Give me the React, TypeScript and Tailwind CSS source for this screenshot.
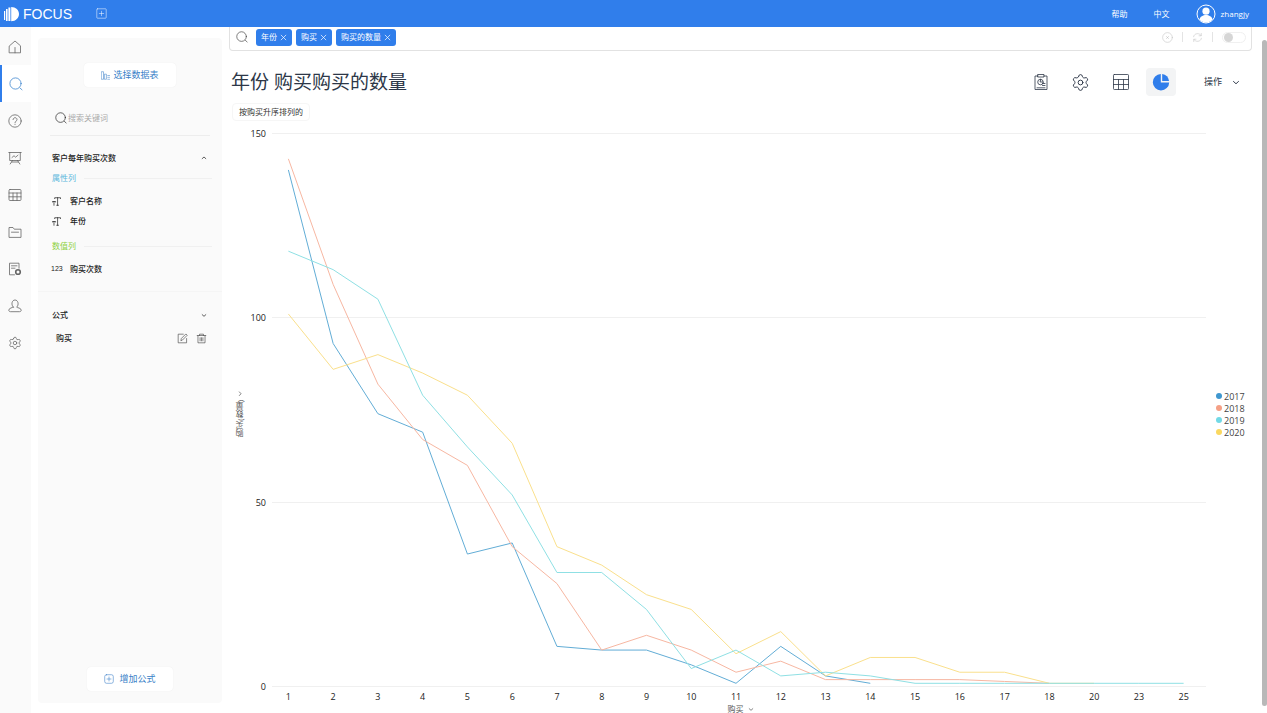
import type { ReactNode } from "react";
import { Settings } from "lucide-react";

const categories = [1, 2, 3, 4, 5, 6, 7, 8, 9, 10, 11, 12, 13, 14, 15, 16, 17, 18, 20, 23, 25];

const series = [
  {
    name: "2017",
    dot: "bg-[#3f97cf]",
    line: "stroke-[#62add6]",
    data: [140, 93, 74, 69, 36, 39, 11, 10, 10, 6, 1, 11, 3, 1],
  },
  {
    name: "2018",
    dot: "bg-[#f5a086]",
    line: "stroke-[#f7b7a2]",
    data: [143, 109, 82, 67, 60, 38, 28, 10, 14, 10, 4, 7, 2, 2, 2, 2, 1.5, 1],
  },
  {
    name: "2020",
    dot: "bg-[#fad860]",
    line: "stroke-[#fae08c]",
    data: [101, 86, 90, 85, 79, 66, 38, 33, 25, 21, 9, 15, 3, 8, 8, 4, 4, 1, 1],
  },
  {
    name: "2019",
    dot: "bg-[#72d9e6]",
    line: "stroke-[#8fe0e4]",
    data: [118, 113, 105, 79, 65, 52, 31, 31, 21, 5, 10, 3, 4, 3, 1, 1, 1, 1, 1, 1, 1],
  },
];

const legend = [...series].sort((a, b) => a.name.localeCompare(b.name));

function Icon({ className = "size-3.5", box = 14, children }: { className?: string; box?: number; children: ReactNode }) {
  return (
    <svg
      viewBox={`0 0 ${box} ${box}`}
      className={`shrink-0 ${className}`}
      fill="none"
      stroke="currentColor"
      strokeWidth="0.8"
      strokeLinecap="round"
      strokeLinejoin="round"
      aria-hidden="true"
    >
      {children}
    </svg>
  );
}

function SearchIcon({ className }: { className?: string }) {
  return (
    <Icon className={className}>
      <circle cx="6.5" cy="6.5" r="5.6" />
      <path d="M11 11 13 12.8" />
    </Icon>
  );
}

function Chevron({ className = "size-1.5", d = "M1.5 4 5 7.2 8.5 4" }: { className?: string; d?: string }) {
  return (
    <svg viewBox="0 0 10 10" className={`shrink-0 ${className}`} fill="none" stroke="currentColor" strokeWidth="1.2" aria-hidden="true">
      <path d={d} />
    </svg>
  );
}

const navItems = [
  {
    label: "首页",
    icon: (
      <Icon>
        <path d="M1.5 5.800 7 1l5.500 4.800v7h-11zM7 12.800V7.500" />
      </Icon>
    ),
  },
  { label: "搜索", active: true, icon: <SearchIcon /> },
  {
    label: "问答",
    icon: (
      <Icon>
        <circle cx="7" cy="7" r="6.2" />
        <path d="M5 5.600c0-2.600 4-2.600 4 0 0 1.500-2 1.500-2 3M7 10.200v.3" />
      </Icon>
    ),
  },
  {
    label: "看板",
    icon: (
      <Icon>
        <path d="M.8 1.500h12.400M1.700 1.500v8h10.600v-8M4 6.500l2-1.800 1.600 1.500 2.400-2M4.500 9.500 2.200 13M9.500 9.500l2.300 3.500M3.800 11h6.400" />
      </Icon>
    ),
  },
  {
    label: "数据表",
    icon: (
      <Icon>
        <rect x="1" y="1.5" width="12" height="11" rx="1" />
        <path d="M1 5h12M1 8.800h12M5 5v7.500M9 5v7.500" />
      </Icon>
    ),
  },
  {
    label: "资源",
    icon: (
      <Icon>
        <path d="M1 12V2.500h4l1.300 1.700H13V12zM3.500 7.200h7" />
      </Icon>
    ),
  },
  {
    label: "报表",
    icon: (
      <Icon>
        <path d="M6.500 12.800h-5V1.200h9.500v5M3.500 3.800h5.500M3.500 6.200h3.500" />
        <circle cx="10" cy="10" r="2.3" strokeWidth="1.6" />
      </Icon>
    ),
  },
  {
    label: "用户",
    icon: (
      <Icon>
        <path d="M5.300 8.200C2.800 5.800 3.800 1 7 1s4.200 4.800 1.700 7.200c.3.600 4.500.6 4.500 3 0 1-.8 1.500-1.700 1.500H2.500C1.600 12.700.8 12.200.8 11.200c0-2.400 4.200-2.400 4.500-3z" />
      </Icon>
    ),
  },
  { label: "设置", icon: <Settings className="size-3.5" strokeWidth={1.3} /> },
];

function Header() {
  return (
    <header className="flex h-[27px] shrink-0 items-center bg-[#307eeb] text-[8px] text-white">
      <a href="#" className="flex items-center gap-1 pl-1" aria-label="FOCUS">
        <svg viewBox="0 0 15 16" className="h-4 w-[15px]" fill="currentColor" aria-hidden="true">
          <path d="M0 5h1.200v9H0zM2 3h1.600v12H2zM4.400 1.500h2v13.500h-2zM7.200 1C11.800 1 15 4 15 8s-3.200 7.200-7.800 7.200z" />
        </svg>
        <span className="font-['Liberation_Sans',sans-serif] text-[14px] leading-none">FOCUS</span>
      </a>
      <button type="button" aria-label="新建" className="ml-6 text-white/80">
        <Icon className="size-[11px]">
          <rect x="1" y="1" width="12" height="12" rx="1" />
          <path d="M7 4.200v5.600M4.200 7h5.600" />
        </Icon>
      </button>
      <nav className="ml-auto flex items-center pr-[18px]">
        <a href="#">帮助</a>
        <button type="button" className="ml-[26px]">中文</button>
        <a href="#" className="ml-[26px] flex items-center gap-[5px]">
          <svg viewBox="0 0 20 20" className="size-5" aria-hidden="true">
            <circle cx="10" cy="10" r="9" fill="none" stroke="#fff" strokeWidth="1" />
            <circle cx="10" cy="7.2" r="3.6" fill="#fff" />
            <path d="M3.500 15.600c1-6 12-6 13 0-3.300 4-9.700 4-13 0z" fill="#fff" />
          </svg>
          <span>zhangjy</span>
        </a>
      </nav>
    </header>
  );
}

function Sidebar() {
  return (
    <nav className="w-[31px] shrink-0 bg-[#fafafa] pt-px text-[#666]">
      {navItems.map((item) => (
        <a
          key={item.label}
          href="#"
          aria-label={item.label}
          className={
            item.active
              ? "flex h-[37px] items-center border-l-2 border-[#307eeb] bg-white pl-[7px] text-[#3f86cf]"
              : "flex h-[37px] items-center pl-2"
          }
        >
          {item.icon}
        </a>
      ))}
    </nav>
  );
}

function GroupLabel({ color, children }: { color: string; children: ReactNode }) {
  return (
    <div className={`flex h-5 items-center gap-2 ${color}`}>
      {children}
      <span className="h-px flex-1 bg-[#f0f0f0]" />
    </div>
  );
}

function Column({ type, children }: { type: "text" | "number"; children: ReactNode }) {
  return (
    <li className="flex h-5 items-center">
      <span className="flex w-[18px] items-center">
        {type === "text" ? (
          <Icon className="size-[9px]" box={10}>
            <path d="M3 1.800V.8h6.500v1M6.200.8v8.400M5.200 9.200h2M.4 5.600V5h3.600v.6M2.200 5v4.200" />
          </Icon>
        ) : (
          <span className="-ml-px font-['Liberation_Sans',sans-serif] text-[7px]">123</span>
        )}
      </span>
      {children}
    </li>
  );
}

function DataPanel() {
  return (
    <aside className="mx-[7px] mt-[11px] mb-2.5 flex w-[184px] shrink-0 flex-col rounded bg-[#fafafa] pt-[25px] pb-3 text-[8px] text-[#222]">
      <button
        type="button"
        className="flex h-6 w-[92px] items-center justify-center gap-[3px] self-center rounded-sm bg-white text-[9px] text-[#3a7fc8] shadow-[0_0_1px_#e5e5e5]"
      >
        <Icon className="size-[9px]" box={10}>
          <path d="M.8.800h2v8.400h-2zM4.200 3.500h1.800v5.700H4.200zM7.500 5h2M7.500 7h2M7.500 9.200h2" strokeWidth="0.6" />
        </Icon>
        选择数据表
      </button>
      <label className="mx-3 mt-3.5 flex h-[35px] items-center gap-px border-b border-[#ededed] pl-[5px]">
        <SearchIcon className="size-3" />
        <input type="text" aria-label="搜索关键词" placeholder="搜索关键词" className="w-full bg-transparent outline-none placeholder:text-[#aaa]" />
      </label>

      {/* Table columns */}
      <div className="mt-3 pr-2.5 pl-3.5">
        <button type="button" className="flex h-5 w-full items-center justify-between pr-[5px] font-medium" aria-expanded="true">
          客户每年购买次数
          <Chevron d="M1.5 6.5 5 3.3 8.5 6.5" />
        </button>
        <GroupLabel color="text-[#5bb8dc]">属性列</GroupLabel>
        <ul className="mt-[3px] font-medium">
          <Column type="text">客户名称</Column>
          <Column type="text">年份</Column>
        </ul>
        <div className="mt-[5px]">
          <GroupLabel color="text-[#8fd13f]">数值列</GroupLabel>
        </div>
        <ul className="mt-[3px] font-medium">
          <Column type="number">购买次数</Column>
        </ul>
      </div>

      {/* Formulas */}
      <div className="mt-3 border-t border-[#f5f5f5] pt-[13px] pr-2.5 pl-3.5">
        <button type="button" className="flex h-5 w-full items-center justify-between pr-[5px] font-medium" aria-expanded="true">
          公式
          <Chevron />
        </button>
        <div className="mt-[3px] flex h-5 items-center pr-[5px] pl-1 font-medium">
          <span className="flex-1">购买</span>
          <button type="button" aria-label="编辑" className="mr-2 text-[#444]">
            <Icon className="size-[11px]">
              <path d="M8 1.500H1.500v11h10.700V7M5 9.300l.5-2.300L11.300 1.200l1.700 1.700-5.800 5.800z" />
            </Icon>
          </button>
          <button type="button" aria-label="删除" className="text-[#444]">
            <Icon className="size-[11px]">
              <path d="M1.500 3.200h11M4.500 3.200V1.500h5v1.700M2.500 3.200v9.300h9V3.200M5.200 6v4M7 6v4M8.800 6v4" />
            </Icon>
          </button>
        </div>
      </div>

      <button
        type="button"
        className="mt-auto flex h-6 w-[86px] items-center justify-center gap-[5px] self-center rounded-sm bg-white text-[9px] text-[#3a7fc8] shadow-[0_0_1px_#e5e5e5]"
      >
        <Icon className="size-2.5">
          <rect x="1" y="1" width="12" height="12" rx="2.5" />
          <path d="M7 4.200v5.600M4.200 7h5.600" />
        </Icon>
        增加公式
      </button>
    </aside>
  );
}

function SearchBar() {
  return (
    <div className="flex h-6 shrink-0 items-center rounded-b border border-t-0 border-[#e2e2e2] pr-[5px] pb-[3px] pl-1.5 text-[8px]">
      <SearchIcon className="size-3 text-[#444]" />
      <div className="ml-2 flex gap-1">
        {["年份", "购买", "购买的数量"].map((term) => (
          <span key={term} className="flex h-[17px] items-center gap-[3px] rounded-[3px] bg-[#307eeb] px-[5px] text-white">
            {term}
            <button type="button" aria-label={`移除${term}`}>
              <svg viewBox="0 0 8 8" className="size-[7px]" stroke="currentColor" strokeWidth="0.8" aria-hidden="true">
                <path d="M1 1l6 6M7 1 1 7" />
              </svg>
            </button>
          </span>
        ))}
      </div>
      <input type="text" aria-label="搜索" className="min-w-0 flex-1 px-2 outline-none" />
      <div className="flex items-center gap-[9px] text-[#c8c8c8]">
        <button type="button" aria-label="清空">
          <Icon className="size-[11px]">
            <circle cx="7" cy="7" r="6.2" />
            <path d="M6 6l2 2M8 6 6 8" strokeWidth="1.2" />
          </Icon>
        </button>
        <span className="h-2.5 w-px bg-[#e4e4e4]" />
        <button type="button" aria-label="刷新">
          <Icon className="size-[11px]">
            <path d="M2 6C2.500 1.500 9.500.5 11.500 4.500M11.800 1.800v3H9M12 8c-.5 4.500-7.500 5.500-9.500 1.500M2.200 12.200v-3H5" />
          </Icon>
        </button>
        <span className="h-2.5 w-px bg-[#e4e4e4]" />
        <input
          type="checkbox"
          role="switch"
          aria-label="自动搜索"
          className="h-[11px] w-6 appearance-none rounded-full border border-[#f0f0f0] bg-white before:ml-px before:block before:size-[9px] before:rounded-full before:bg-[#d6d6d6]"
        />
      </div>
    </div>
  );
}

function Toolbar() {
  return (
    <div className="mt-4 flex h-[30px] shrink-0 items-center pr-3 pl-0.5 text-[#2d3748]">
      <h1 className="flex-1 text-[19px] leading-none font-normal">年份 购买购买的数量</h1>
      <div className="flex items-center gap-2.5">
        <button type="button" aria-label="保存" className="flex h-7 w-[30px] items-center justify-center">
          <Icon className="size-[18px]" box={18}>
            <path d="M6 3H3v13.500h12V3h-3M6 1.500h6V4H6zM5 14.800h8M10.500 10.500H13M10.500 12.500H13" />
            <path d="M8.500 6.200a2.800 2.800 0 1 0 2.800 2.800H8.500zM8.500 6.200a2.800 2.800 0 0 1 2.800 2.800" />
          </Icon>
        </button>
        <button type="button" aria-label="配置" className="flex h-7 w-[30px] items-center justify-center">
          <Settings className="size-[19px]" strokeWidth={1.2} />
        </button>
        <button type="button" aria-label="表格" className="flex h-7 w-[30px] items-center justify-center">
          <Icon className="size-[18px]" box={18}>
            <rect x="1.5" y="1.5" width="15" height="15" rx="0.8" />
            <path d="M1.500 6.500h15M1.500 11.500h15M6.500 6.500v10M11.500 6.500v10" />
          </Icon>
        </button>
        <button type="button" aria-label="图表" aria-pressed="true" className="flex h-7 w-[30px] items-center justify-center rounded bg-[#f3f4f5] text-[#307eeb]">
          <svg viewBox="0 0 18 18" className="size-[18px]" fill="currentColor" aria-hidden="true">
            <path d="M8.800 1v8.400h8.400A8.200 8.200 0 1 1 8.800 1z" />
            <path d="M10.200 1a7.600 7.600 0 0 1 6.900 7h-6.900z" />
          </svg>
        </button>
      </div>
      <button type="button" aria-haspopup="menu" className="ml-7 flex items-center gap-2.5 text-[9px]">
        操作
        <Chevron className="size-2" />
      </button>
    </div>
  );
}

function LineChart() {
  return (
    <section className="flex min-h-0 flex-1 flex-col pt-3 text-[9px] leading-none text-[#222]">
      <div className="flex min-h-0 flex-1">
        <div className="flex w-[22px] items-center justify-center pt-2 text-[8px] text-[#555]">
          <button type="button" className="flex rotate-180 items-center gap-[3px] [writing-mode:vertical-rl]">
            购买(数量)
            <Chevron d="M6.5 1.5 3.3 5 6.5 8.5" />
          </button>
        </div>
        <div className="flex w-[15px] flex-col justify-between text-right">
          {[150, 100, 50, 0].map((tick) => (
            <div key={tick} className="flex h-px items-center justify-end">
              {tick}
            </div>
          ))}
        </div>
        <div className="grid min-h-0 min-w-0 flex-1">
          <div className="col-start-1 row-start-1 ml-1.5 flex flex-col justify-between">
            {[150, 100, 50, 0].map((tick) => (
              <div key={tick} className="h-px bg-[#f0f0f0]" />
            ))}
          </div>
          <svg
            viewBox={`0 0 ${categories.length} 150`}
            preserveAspectRatio="none"
            className="col-start-1 row-start-1 h-full min-h-0 w-full"
            role="img"
            aria-label="购买(数量)"
          >
            {series.map((s) => (
              <polyline
                key={s.name}
                points={s.data.map((v, i) => `${i + 0.5},${150 - v}`).join(" ")}
                className={s.line}
                fill="none"
                strokeWidth="1"
                vectorEffect="non-scaling-stroke"
              />
            ))}
          </svg>
        </div>
        <ul className="flex w-[46px] flex-col justify-center gap-[3px] pt-2 pl-2.5 text-[#444]">
          {legend.map((s) => (
            <li key={s.name} className="flex items-center gap-0.5">
              <span className={`size-1.5 rounded-full ${s.dot}`} />
              {s.name}
            </li>
          ))}
        </ul>
      </div>
      <div className="flex h-[18px] shrink-0 items-center pr-[46px] pl-[37px] text-center">
        {categories.map((c) => (
          <span key={c} className="w-0 flex-1">
            {c}
          </span>
        ))}
      </div>
      <button type="button" className="flex h-2 shrink-0 items-center justify-center gap-1 text-[8px] text-[#555]">
        购买
        <Chevron />
      </button>
    </section>
  );
}

export default function App() {
  return (
    <div className="flex h-screen flex-col overflow-hidden bg-white font-['Open_Sans','Noto_Sans_CJK_SC',sans-serif]">
      <Header />
      <div className="flex min-h-0 flex-1">
        <Sidebar />
        <DataPanel />
        <main className="flex min-w-0 flex-1 flex-col pr-2.5">
          <SearchBar />
          <Toolbar />
          <div className="mt-1.5 ml-[3px] flex h-[18px] shrink-0 items-center self-start rounded-sm border border-[#f6f6f6] px-1.5 text-[8px] text-[#333]">
            按购买升序排列的
          </div>
          <LineChart />
        </main>
        {/* Scroll thumb */}
        <div className="mt-[13px] mb-[7px] w-[5px] shrink-0 rounded-full bg-[#b8b8b8]" />
      </div>
    </div>
  );
}
